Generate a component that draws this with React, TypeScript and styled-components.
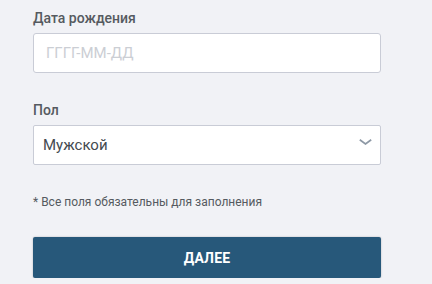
import React from 'react'
import { createGlobalStyle, styled } from 'styled-components'

const GlobalStyle = createGlobalStyle`
  html, body {
    margin: 0;
    padding: 0;
    background: #f1f2f6;
    font-family: Roboto, 'Liberation Sans', Arial, sans-serif;
  }
`

const App: React.FC = () => {
  return (
    <>
      <GlobalStyle />
      <Form>
        <Field>
          <Label>Дата рождения</Label>
          <Input type="text" placeholder="ГГГГ-ММ-ДД" />
        </Field>

        <Field>
          <Label>Пол</Label>
          <SelectWrap>
            <Select defaultValue="m">
              <option value="m">Мужской</option>
              <option value="f">Женский</option>
            </Select>
            <Chevron width="13" height="6" viewBox="0 0 13 6">
              <path d="M0.8 0.8 L6.5 5 L12.2 0.8" fill="none" stroke="#8d98a5" strokeWidth="1.7" />
            </Chevron>
          </SelectWrap>
        </Field>

        <Note>* Все поля обязательны для заполнения</Note>

        <Button type="button">ДАЛЕЕ</Button>
      </Form>
    </>
  )
}

const Form = styled.div`
  display: flex;
  flex-direction: column;
  width: 348px;
  padding: 8px 0 0 33px;
`

const Field = styled.div`
  display: flex;
  flex-direction: column;
  margin-bottom: 27px;
`

const Label = styled.label`
  font-size: 14px;
  line-height: 20px;
  font-weight: 500;
  color: #555a60;
  margin-bottom: 5px;
`

const Input = styled.input`
  box-sizing: border-box;
  height: 40px;
  width: 100%;
  padding: 0 12px;
  border: 1px solid #c9ccd6;
  border-radius: 3px;
  background: #fff;
  font-family: inherit;
  font-size: 15px;
  color: #333;
  outline: none;

  &::placeholder {
    color: #cbced4;
  }
`

const SelectWrap = styled.div`
  position: relative;
`

const Select = styled.select`
  box-sizing: border-box;
  appearance: none;
  height: 40px;
  width: 100%;
  padding: 0 9px;
  border: 1px solid #c9ccd6;
  border-radius: 2px;
  background: #fff;
  font-family: inherit;
  font-size: 15px;
  color: #444a50;
  outline: none;
`

const Chevron = styled.svg`
  position: absolute;
  right: 9px;
  top: 14px;
  pointer-events: none;
`

const Note = styled.div`
  font-size: 12px;
  line-height: 16px;
  color: #555a60;
  margin-top: 2px;
`

const Button = styled.button`
  box-sizing: border-box;
  margin-top: 27px;
  height: 41px;
  width: 100%;
  border: none;
  border-radius: 2px;
  background: #27587a;
  box-shadow: 0 0 2px rgba(0, 0, 0, 0.25);
  color: #fff;
  font-family: inherit;
  font-size: 14px;
  font-weight: 700;
  letter-spacing: 0.2px;
  cursor: pointer;
`

export default App
